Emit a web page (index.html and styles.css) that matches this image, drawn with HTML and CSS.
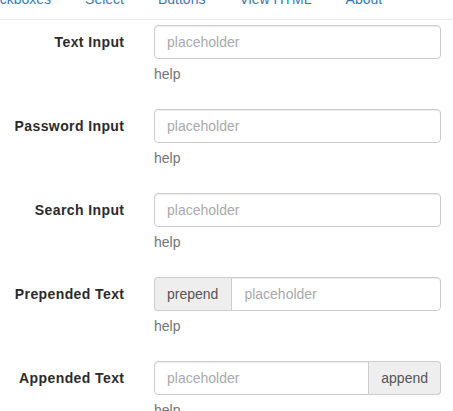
FILE: index.html
```html
<!DOCTYPE html>
<html>
<head>
<meta charset="utf-8">
<link rel="stylesheet" href="styles.css">
</head>
<body>
<nav class="navbar">
  <ul class="nav-links">
    <li><a href="#">Checkboxes</a></li>
    <li><a href="#">Select</a></li>
    <li><a href="#">Buttons</a></li>
    <li><a href="#">View HTML</a></li>
    <li><a href="#">About</a></li>
  </ul>
</nav>
<form class="form">
  <div class="form-group">
    <label class="control-label">Text Input</label>
    <div class="control">
      <input class="form-control" type="text" placeholder="placeholder">
      <p class="help-block">help</p>
    </div>
  </div>
  <div class="form-group">
    <label class="control-label">Password Input</label>
    <div class="control">
      <input class="form-control" type="password" placeholder="placeholder">
      <p class="help-block">help</p>
    </div>
  </div>
  <div class="form-group">
    <label class="control-label">Search Input</label>
    <div class="control">
      <input class="form-control" type="search" placeholder="placeholder">
      <p class="help-block">help</p>
    </div>
  </div>
  <div class="form-group">
    <label class="control-label">Prepended Text</label>
    <div class="control">
      <div class="input-group">
        <span class="addon addon-first">prepend</span>
        <input class="form-control group-last" type="text" placeholder="placeholder">
      </div>
      <p class="help-block">help</p>
    </div>
  </div>
  <div class="form-group">
    <label class="control-label">Appended Text</label>
    <div class="control">
      <div class="input-group">
        <input class="form-control group-first" type="text" placeholder="placeholder">
        <span class="addon addon-last">append</span>
      </div>
      <p class="help-block">help</p>
    </div>
  </div>
</form>
</body>
</html>
```
FILE: styles.css
```css
* { box-sizing: border-box; }
html, body {
  margin: 0;
  padding: 0;
  background: #fff;
  font-family: "Liberation Sans", Arial, sans-serif;
  font-size: 14px;
  line-height: 20px;
  color: #333;
  overflow: hidden;
}
.navbar {
  height: 20px;
  border-bottom: 1px solid #e7e7e7;
  overflow: hidden;
}
.nav-links {
  list-style: none;
  margin: -11px 0 0 -43px;
  padding: 0;
  display: flex;
  white-space: nowrap;
}
.nav-links li a {
  display: block;
  padding: 0 17px;
  line-height: 20px;
  color: #337ab7;
  text-decoration: none;
}
.form {
  margin: 5px 0 0 0;
}
.form-group {
  display: grid;
  grid-template-columns: 124px 287px;
  column-gap: 30px;
  margin-bottom: 15px;
}
.control-label {
  text-align: right;
  font-weight: bold;
  padding-top: 7px;
  white-space: nowrap;
  letter-spacing: 0.4px;
  margin-right: -0.4px;
  color: #2b2b2b;
}
.form-control {
  display: block;
  width: 100%;
  height: 34px;
  padding: 6px 12px;
  font-family: inherit;
  font-size: 14px;
  line-height: 20px;
  color: #555;
  background: #fff;
  border: 1px solid #ccc;
  border-radius: 4px;
  box-shadow: inset 0 1px 1px rgba(0,0,0,.075);
  outline: none;
  -webkit-appearance: none;
  appearance: none;
}
.form-control::placeholder { color: #aaa; }
.help-block {
  margin: 5px 0 10px;
  color: #737373;
}
.input-group {
  display: flex;
  width: 100%;
}
.input-group .form-control {
  flex: 1;
  width: auto;
  min-width: 0;
}
.addon {
  display: flex;
  align-items: center;
  height: 34px;
  padding: 6px 12px;
  color: #555;
  background: #eee;
  border: 1px solid #ccc;
  white-space: nowrap;
}
.addon-first {
  border-right: 0;
  border-radius: 4px 0 0 4px;
  padding-right: 13px;
}
.addon-last {
  border-left: 0;
  border-radius: 0 4px 4px 0;
}
.group-last { border-radius: 0 4px 4px 0; }
.group-first { border-radius: 4px 0 0 4px; }
```
